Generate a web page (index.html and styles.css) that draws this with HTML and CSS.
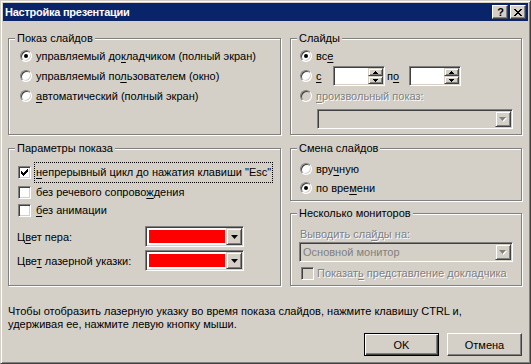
FILE: index.html
```html
<!DOCTYPE html>
<html lang="ru">
<head>
    <meta charset="UTF-8">
    <meta name="viewport" content="width=device-width, initial-scale=1.0">
    <title>Настройка презентации</title>
    <link rel="stylesheet" href="styles.css">
</head>
<body>
    <div class="window">
        <div class="titlebar">
            <span class="title">Настройка презентации</span>
            <div class="caption-buttons">
                <span class="cap-btn help">?</span>
                <span class="cap-btn">
                    <svg width="8" height="7" viewBox="0 0 8 7"><path d="M0 0h2v1h-2z M6 0h2v1h-2z M1 1h2v1h-2z M5 1h2v1h-2z M2 2h4v1h-4z M3 3h2v1h-2z M2 4h4v1h-4z M1 5h2v1h-2z M5 5h2v1h-2z M0 6h2v1h-2z M6 6h2v1h-2z" fill="#000"/></svg>
                </span>
            </div>
        </div>

        <div class="dialog">
            <div class="groups">
                <div class="group group-show">
                    <span class="group-title">Показ слайдов</span>
                    <div class="row"><span class="radio checked"></span><span>управляемый до<u>к</u>ладчиком (полный экран)</span></div>
                    <div class="row"><span class="radio"></span><span>управляемый по<u>л</u>ьзователем (окно)</span></div>
                    <div class="row row-short"><span class="radio"></span><span><u>а</u>втоматический (полный экран)</span></div>
                </div>

                <div class="group group-slides">
                    <span class="group-title">Слайды</span>
                    <div class="row"><span class="radio checked"></span><span>вс<u>е</u></span></div>
                    <div class="row">
                        <span class="radio"></span><span class="from-label"><u>с</u></span>
                        <div class="spin"><div class="spin-buttons"><span class="spin-btn"><svg width="5" height="3" viewBox="0 0 5 3"><path d="M2 0h1v1h1v1h1v1h-5v-1h1v-1h1z" fill="#000"/></svg></span><span class="spin-btn"><svg width="5" height="3" viewBox="0 0 5 3"><path d="M0 0h5v1h-1v1h-1v1h-1v-1h-1v-1h-1z" fill="#000"/></svg></span></div></div>
                        <span class="to-label">п<u>о</u></span>
                        <div class="spin"><div class="spin-buttons"><span class="spin-btn"><svg width="5" height="3" viewBox="0 0 5 3"><path d="M2 0h1v1h1v1h1v1h-5v-1h1v-1h1z" fill="#000"/></svg></span><span class="spin-btn"><svg width="5" height="3" viewBox="0 0 5 3"><path d="M0 0h5v1h-1v1h-1v1h-1v-1h-1v-1h-1z" fill="#000"/></svg></span></div></div>
                    </div>
                    <div class="row row-short"><span class="radio disabled"></span><span class="disabled-text"><u>п</u>роизвольный показ:</span></div>
                    <div class="combo combo-custom disabled-field">
                        <span class="combo-value"></span>
                        <span class="drop-btn"><svg width="8" height="5" viewBox="0 0 8 5"><path d="M1 1h7l-3.5 4z" fill="#fff"/><path d="M0 0h7l-3.5 4z" fill="#808080"/></svg></span>
                    </div>
                </div>

                <div class="group group-options">
                    <span class="group-title">Параметры показа</span>
                    <div class="check-row first">
                        <span class="check"><svg width="7" height="7" viewBox="0 0 7 7"><path d="M6 0h1v1h-1z M5 1h2v1h-2z M0 2h1v1h-1z M4 2h3v1h-3z M0 3h2v1h-2z M3 3h3v1h-3z M0 4h5v1h-5z M1 5h3v1h-3z M2 6h1v1h-1z" fill="#000"/></svg></span>
                        <span class="focus-label"><u>н</u>епрерывный цикл до нажатия клавиши "Esc"</span>
                    </div>
                    <div class="check-row"><span class="check"></span><span class="check-text">без речевого сопрово<u>ж</u>дения</span></div>
                    <div class="check-row"><span class="check"></span><span class="check-text"><u>б</u>ез анимации</span></div>
                    <div class="color-row">
                        <span class="color-label">Ц<u>в</u>ет пера:</span>
                        <div class="color-combo"><span class="swatch"></span><span class="drop-btn"><svg width="7" height="4" viewBox="0 0 7 4"><path d="M0 0h7l-3.5 4z" fill="#000"/></svg></span></div>
                    </div>
                    <div class="color-row">
                        <span class="color-label">Цве<u>т</u> лазерной указки:</span>
                        <div class="color-combo"><span class="swatch"></span><span class="drop-btn"><svg width="7" height="4" viewBox="0 0 7 4"><path d="M0 0h7l-3.5 4z" fill="#000"/></svg></span></div>
                    </div>
                </div>

                <div class="right-stack">
                    <div class="group group-advance">
                        <span class="group-title">Смена слайдов</span>
                        <div class="row row-short"><span class="radio"></span><span>вру<u>ч</u>ную</span></div>
                        <div class="row row-short"><span class="radio checked"></span><span>по вре<u>м</u>ени</span></div>
                    </div>
                    <div class="group group-monitors">
                        <span class="group-title">Несколько мониторов</span>
                        <span class="monitor-label disabled-text">Выводить сла<u>й</u>ды на:</span>
                        <div class="combo combo-monitor disabled-field">
                            <span class="combo-value">Основной монитор</span>
                            <span class="drop-btn"><svg width="8" height="5" viewBox="0 0 8 5"><path d="M1 1h7l-3.5 4z" fill="#fff"/><path d="M0 0h7l-3.5 4z" fill="#808080"/></svg></span>
                        </div>
                        <div class="check-row presenter"><span class="check disabled"></span><span class="check-text disabled-text">Показат<u>ь</u> представление докладчика</span></div>
                    </div>
                </div>
            </div>

            <p class="hint">Чтобы отобразить лазерную указку во время показа слайдов, нажмите клавишу CTRL и,<br>удерживая ее, нажмите левую кнопку мыши.</p>

            <div class="actions">
                <button class="btn default">OK</button>
                <button class="btn">Отмена</button>
            </div>
        </div>
    </div>
</body>
</html>
```

FILE: styles.css
```css
body {
    margin: 0;
    font-family: "Liberation Sans", Arial, sans-serif;
    font-size: 11px;
    color: #000;
    background-color: #d4d0c8;
}

u {
    text-decoration-thickness: 1px;
    text-underline-offset: 2px;
}

.window {
    box-sizing: border-box;
    width: 531px;
    height: 364px;
    padding: 2px;
    border: 1px solid;
    border-color: #d4d0c8 #404040 #404040 #d4d0c8;
    box-shadow: inset 1px 1px #fff, inset -1px -1px #808080;
    background-color: #d4d0c8;
}

/* title bar */

.titlebar {
    height: 18px;
    display: flex;
    align-items: center;
    justify-content: space-between;
    padding: 0 2px;
    background-color: #0a246a;
}

.title {
    color: #fff;
    font-weight: bold;
    font-size: 11px;
    letter-spacing: -0.25px;
}

.caption-buttons {
    display: flex;
    gap: 2px;
}

.cap-btn {
    box-sizing: border-box;
    width: 16px;
    height: 14px;
    display: flex;
    align-items: center;
    justify-content: center;
    border: 1px solid;
    border-color: #fff #404040 #404040 #fff;
    box-shadow: inset -1px -1px #808080;
    background-color: #d4d0c8;
}

.cap-btn.help {
    font-weight: bold;
    font-size: 11px;
    line-height: 12px;
    padding-left: 1px;
}

/* dialog body */

.dialog {
    padding: 17px 6px 0 5px;
}

.groups {
    display: grid;
    grid-template-columns: 273px 232px;
    grid-template-rows: 97px 138px;
    column-gap: 9px;
    row-gap: 13px;
}

.group {
    position: relative;
    box-sizing: border-box;
    border: 1px solid #808080;
    box-shadow: inset 1px 1px #fff, 1px 1px #fff;
}

.group-title {
    position: absolute;
    top: -7px;
    left: 6px;
    padding: 0 2px;
    line-height: 13px;
    background-color: #d4d0c8;
}

.right-stack {
    display: flex;
    flex-direction: column;
    justify-content: space-between;
}

.group-show {
    padding: 7px 0 0 11px;
}

.group-slides {
    padding: 7px 0 0 9px;
}

.group-advance {
    height: 53px;
    padding: 10px 0 0 9px;
}

.group-monitors {
    height: 73px;
    padding: 14px 0 0 8px;
}

.group-options {
    padding: 13px 0 0 8px;
}

/* radios and checkboxes */

.row {
    height: 20px;
    display: flex;
    align-items: center;
    gap: 4px;
}

.row.row-short {
    height: 19px;
}

.radio {
    box-sizing: border-box;
    width: 12px;
    height: 12px;
    flex: none;
    display: flex;
    align-items: center;
    justify-content: center;
    border: 1px solid;
    border-color: #808080 #fff #fff #808080;
    border-radius: 50%;
    box-shadow: inset 1px 1px #404040, inset -1px -1px #d4d0c8;
    background-color: #fff;
}

.radio.checked::after {
    content: "";
    width: 4px;
    height: 4px;
    border-radius: 50%;
    background-color: #000;
}

.radio.disabled {
    background-color: #d4d0c8;
}

.check {
    box-sizing: border-box;
    width: 13px;
    height: 13px;
    flex: none;
    display: flex;
    align-items: center;
    justify-content: center;
    border: 1px solid;
    border-color: #808080 #fff #fff #808080;
    box-shadow: inset 1px 1px #404040, inset -1px -1px #d4d0c8;
    background-color: #fff;
}

.check.disabled {
    background-color: #d4d0c8;
}

.check-row {
    height: 18px;
    display: flex;
    align-items: center;
    gap: 5px;
    margin-left: 1px;
}

.check-row.first {
    height: 21px;
    gap: 3px;
}

.focus-label {
    flex: 1;
    box-sizing: border-box;
    height: 21px;
    margin-right: 7px;
    padding: 0 1px;
    line-height: 19px;
    white-space: nowrap;
    border: 1px dotted #000;
}

.disabled-text {
    color: #808080;
    text-shadow: 1px 1px 0 #fff;
}

/* spin boxes */

.from-label {
    width: 13px;
}

.to-label {
    width: 18px;
    margin-left: -2px;
}

.spin {
    box-sizing: border-box;
    width: 52px;
    height: 20px;
    padding: 1px;
    display: flex;
    justify-content: flex-end;
    border: 1px solid;
    border-color: #808080 #fff #fff #808080;
    box-shadow: inset 1px 1px #404040, inset -1px -1px #d4d0c8;
    background-color: #fff;
}

.spin-buttons {
    width: 15px;
    display: flex;
    flex-direction: column;
}

.spin-btn {
    flex: 1;
    display: flex;
    align-items: center;
    justify-content: center;
    border: 1px solid;
    border-color: #d4d0c8 #404040 #404040 #d4d0c8;
    box-shadow: inset 1px 1px #fff, inset -1px -1px #808080;
    background-color: #d4d0c8;
}

/* combo boxes */

.combo {
    box-sizing: border-box;
    height: 20px;
    padding: 1px;
    display: flex;
    border: 1px solid;
    border-color: #808080 #fff #fff #808080;
    box-shadow: inset 1px 1px #404040, inset -1px -1px #d4d0c8;
    background-color: #fff;
}

.combo.disabled-field {
    background-color: #d4d0c8;
}

.combo-custom {
    width: 196px;
    margin: 4px 0 0 17px;
}

.combo-monitor {
    width: 214px;
    margin-top: 1px;
}

.combo-value {
    flex: 1;
    display: flex;
    align-items: center;
    padding-left: 2px;
    color: #808080;
}

.drop-btn {
    box-sizing: border-box;
    width: 16px;
    flex: none;
    display: flex;
    align-items: center;
    justify-content: center;
    border: 1px solid;
    border-color: #d4d0c8 #404040 #404040 #d4d0c8;
    box-shadow: inset 1px 1px #fff, inset -1px -1px #808080;
    background-color: #d4d0c8;
}

.monitor-label {
    display: block;
    line-height: 13px;
    margin-left: 1px;
}

.check-row.presenter {
    margin: 2px 0 0 2px;
    gap: 3px;
}

.color-row {
    height: 21px;
    display: flex;
    align-items: center;
    margin-top: 3px;
}

.check-row + .color-row {
    margin-top: 7px;
}

.color-label {
    width: 128px;
}

.color-combo {
    box-sizing: border-box;
    width: 99px;
    height: 21px;
    padding: 1px;
    display: flex;
    border: 1px solid;
    border-color: #808080 #fff #fff #808080;
    box-shadow: inset 1px 1px #404040, inset -1px -1px #d4d0c8;
    background-color: #fff;
}

.swatch {
    flex: 1;
    margin: 2px 1px 2px 2px;
    background-color: #f00;
}

/* footer */

.hint {
    margin: 19px 0 0 0;
    line-height: 13px;
}

.actions {
    display: flex;
    justify-content: flex-end;
    gap: 8px;
    margin-top: 2px;
}

.btn {
    box-sizing: border-box;
    width: 75px;
    height: 23px;
    padding: 0;
    font-family: inherit;
    font-size: 11px;
    color: #000;
    border: 1px solid;
    border-color: #fff #404040 #404040 #fff;
    box-shadow: inset -1px -1px #808080;
    background-color: #d4d0c8;
}

.btn.default {
    border-color: #000;
    box-shadow: inset 1px 1px #fff, inset -1px -1px #404040, inset -2px -2px #808080;
}
```
